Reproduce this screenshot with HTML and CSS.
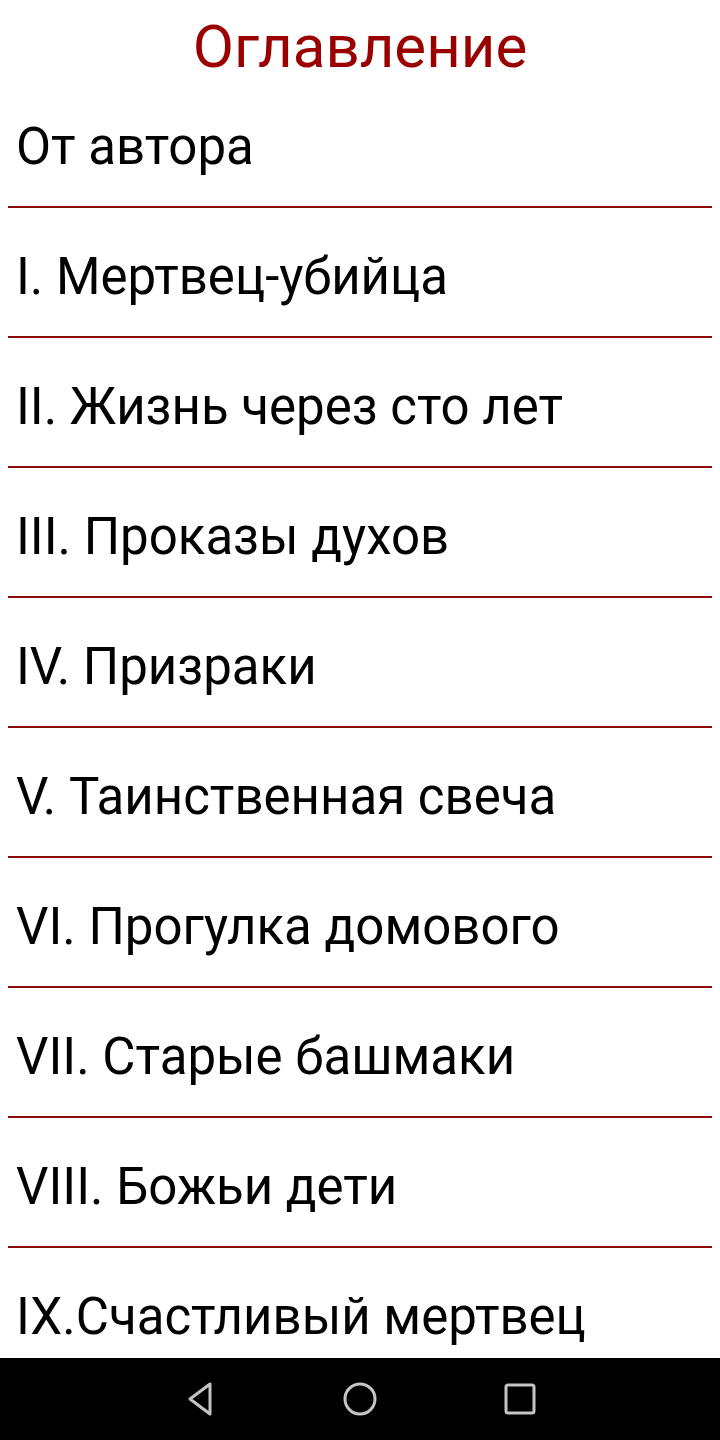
FILE: index.html
```html
<!DOCTYPE html>
<html lang="ru">
<head>
<meta charset="utf-8">
<link rel="stylesheet" href="styles.css">
</head>
<body>
<div class="screen">
  <main class="content">
    <h1 class="title">Оглавление</h1>
    <ul class="toc">
      <li class="item">От автора</li>
      <li class="item">I. Мертвец-убийца</li>
      <li class="item">II. Жизнь через сто лет</li>
      <li class="item">III. Проказы духов</li>
      <li class="item">IV. Призраки</li>
      <li class="item">V. Таинственная свеча</li>
      <li class="item">VI. Прогулка домового</li>
      <li class="item">VII. Старые башмаки</li>
      <li class="item">VIII. Божьи дети</li>
      <li class="item">IX.Счастливый мертвец</li>
    </ul>
  </main>
  <nav class="navbar">
    <svg class="nav-icon" width="40" height="40" viewBox="0 0 40 40">
      <path d="M30 5 L30 35 L10 20 Z" fill="none" stroke="#c4c4c4" stroke-width="3" stroke-linejoin="round"/>
    </svg>
    <svg class="nav-icon" width="40" height="40" viewBox="0 0 40 40">
      <circle cx="20" cy="20" r="15" fill="none" stroke="#c4c4c4" stroke-width="3"/>
    </svg>
    <svg class="nav-icon" width="40" height="40" viewBox="0 0 40 40">
      <rect x="6" y="6" width="28" height="28" rx="2" fill="none" stroke="#c4c4c4" stroke-width="3"/>
    </svg>
  </nav>
</div>
</body>
</html>
```

FILE: styles.css
```css
html, body {
  margin: 0;
  padding: 0;
  background: #ffffff;
}
.screen {
  width: 720px;
  height: 1440px;
  display: flex;
  flex-direction: column;
  overflow: hidden;
  font-family: Roboto, "Noto Sans", sans-serif;
}
.content {
  flex: 1;
  overflow: hidden;
  padding: 0 8px;
}
.title {
  margin: 0;
  box-sizing: border-box;
  height: 78px;
  padding-top: 16px;
  line-height: 1;
  text-align: center;
  font-weight: 400;
  font-size: 60px;
  color: #9a0000;
  display: flex;
  align-items: center;
  justify-content: center;
}
.toc {
  list-style: none;
  margin: 0;
  padding: 0;
}
.item {
  box-sizing: content-box;
  height: 120px;
  padding: 8px 0 0 8px;
  display: flex;
  align-items: center;
  font-size: 51px;
  color: #000000;
  border-bottom: 2px solid #8b0a0a;
  white-space: nowrap;
}
.navbar {
  height: 82px;
  flex: none;
  background: #000000;
  display: flex;
  justify-content: center;
  align-items: center;
  gap: 120px;
}
.nav-icon {
  display: block;
}
```
